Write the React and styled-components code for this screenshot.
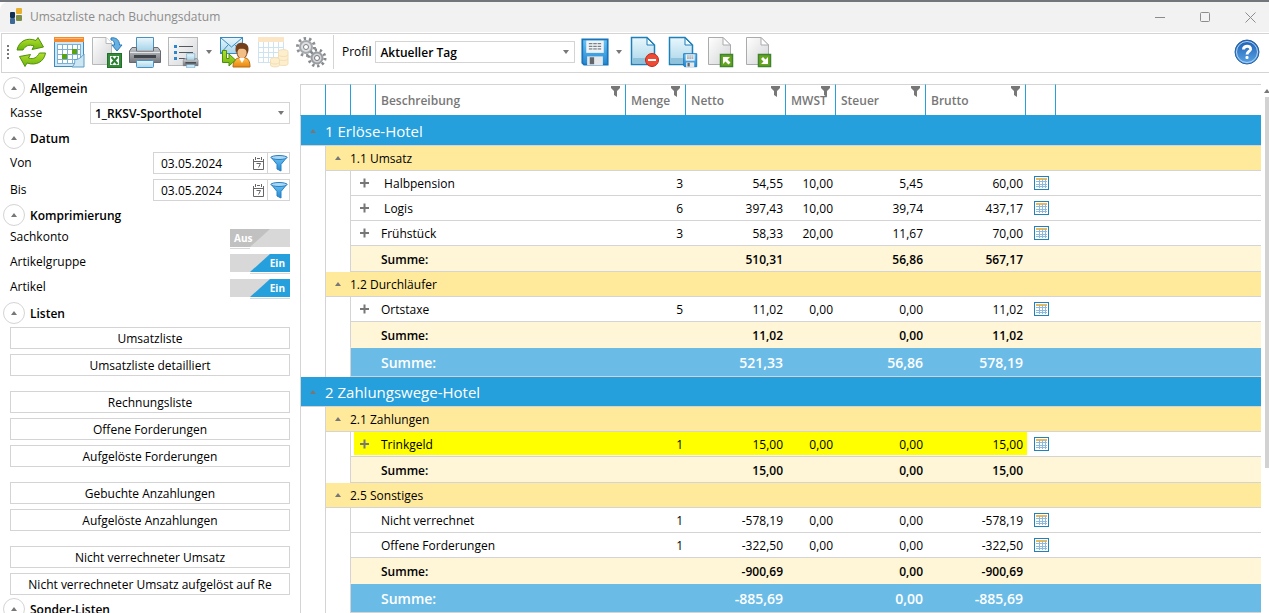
import React, { useState } from "react";
import styled, { createGlobalStyle } from "styled-components";

const sections = [
  {
    title: "1 Erlöse-Hotel",
    groups: [
      {
        title: "1.1 Umsatz",
        rows: [
          { name: "\u00a0Halbpension", values: ["3", "54,55", "10,00", "5,45", "60,00"], open: true },
          { name: "\u00a0Logis", values: ["6", "397,43", "10,00", "39,74", "437,17"], open: true },
          { name: "Frühstück", values: ["3", "58,33", "20,00", "11,67", "70,00"], open: true },
        ],
        sum: ["", "510,31", "", "56,86", "567,17"],
      },
      {
        title: "1.2 Durchläufer",
        rows: [
          { name: "Ortstaxe", values: ["5", "11,02", "0,00", "0,00", "11,02"], open: true },
        ],
        sum: ["", "11,02", "", "0,00", "11,02"],
      },
    ],
    total: ["", "521,33", "", "56,86", "578,19"],
  },
  {
    title: "2 Zahlungswege-Hotel",
    groups: [
      {
        title: "2.1 Zahlungen",
        rows: [
          { name: "Trinkgeld", values: ["1", "15,00", "0,00", "0,00", "15,00"], open: true, marked: true },
        ],
        sum: ["", "15,00", "", "0,00", "15,00"],
      },
      {
        title: "2.5 Sonstiges",
        rows: [
          { name: "Nicht verrechnet", values: ["1", "-578,19", "0,00", "0,00", "-578,19"] },
          { name: "Offene Forderungen", values: ["1", "-322,50", "0,00", "0,00", "-322,50"] },
        ],
        sum: ["", "-900,69", "", "0,00", "-900,69"],
      },
    ],
    total: ["", "-885,69", "", "0,00", "-885,69"],
  },
];

const columns = ["Beschreibung", "Menge", "Netto", "MWST", "Steuer", "Brutto"];
const columnWidths = [25, 25, 25, 250, 60, 100, 50, 90, 100, 30];

const lists = [
  ["Umsatzliste", "Umsatzliste detailliert"],
  ["Rechnungsliste", "Offene Forderungen", "Aufgelöste Forderungen"],
  ["Gebuchte Anzahlungen", "Aufgelöste Anzahlungen"],
  ["Nicht verrechneter Umsatz", "Nicht verrechneter Umsatz aufgelöst auf Re"],
];

/* ---------- icons ---------- */

const Svg = ({ size = 32, box = size, children }) => (
  <svg width={size} height={size} viewBox={`0 0 ${box} ${box}`} fill="none" aria-hidden="true">
    {children}
  </svg>
);

const Gradients = () => (
  <svg width="0" height="0" style={{ position: "absolute" }} aria-hidden="true">
    <defs>
      <linearGradient id="green" x1="0" y1="0" x2="0" y2="1">
        <stop offset="0" stopColor="#b4e02c" />
        <stop offset="1" stopColor="#6cb40e" />
      </linearGradient>
      <linearGradient id="sky" x1="0" y1="0" x2="0" y2="1">
        <stop offset="0" stopColor="#e9f7fc" />
        <stop offset="1" stopColor="#a9d5ea" />
      </linearGradient>
      <linearGradient id="blue" x1="0" y1="0" x2="0" y2="1">
        <stop offset="0" stopColor="#6cc4f5" />
        <stop offset="1" stopColor="#2287d2" />
      </linearGradient>
      <linearGradient id="grey" x1="0" y1="0" x2="1" y2="1">
        <stop offset="0" stopColor="#ffffff" />
        <stop offset="1" stopColor="#d3d4d6" />
      </linearGradient>
      <linearGradient id="steel" x1="0" y1="0" x2="0" y2="1">
        <stop offset="0" stopColor="#c4c7cb" />
        <stop offset="1" stopColor="#74787e" />
      </linearGradient>
      <linearGradient id="orange" x1="0" y1="0" x2="0" y2="1">
        <stop offset="0" stopColor="#ffc04d" />
        <stop offset="1" stopColor="#e8840f" />
      </linearGradient>
      <linearGradient id="help" x1="0" y1="0" x2="0" y2="1">
        <stop offset="0" stopColor="#1d5fb4" />
        <stop offset="1" stopColor="#5ba4e4" />
      </linearGradient>
    </defs>
  </svg>
);

const LogoIcon = () => (
  <svg width="14" height="18" viewBox="0 0 14 18" aria-hidden="true">
    <rect x="1" y="4" width="5" height="6" rx="1" fill="#12304f" />
    <rect x="7" y="0" width="6" height="6" rx="1" fill="#e7b02c" />
    <rect x="7" y="7" width="6" height="6" rx="1" fill="#7c8f45" />
    <rect x="1" y="10" width="5" height="6" rx="1" fill="#3c6a94" />
  </svg>
);

const RefreshIcon = () => (
  <Svg>
    <path d="M2 14C4 5 12 1 21 4.500L23 1.500 28.500 11 17 13.500 19 10C14 8 10 10 8 14Z" fill="url(#green)" stroke="#4f8f0e" />
    <path d="M30.500 17C29 26 21 30 12 27L10 30.500 4.500 20.500 15.500 18.500 13.500 22C19 24 22 21 24.500 17Z" fill="url(#green)" stroke="#4f8f0e" />
  </Svg>
);

const CalendarIcon = () => (
  <Svg>
    <rect x="1.500" y="1.500" width="29" height="29" fill="#cfe7f5" stroke="#3a8cc0" />
    <rect x="1" y="1" width="30" height="5" fill="#f58a2c" />
    <rect x="2" y="2" width="28" height="1" fill="#fbb777" />
    <rect x="4.500" y="8.500" width="23" height="19" fill="#fff" stroke="#7cb0d4" />
    <path d="M9.500 8v20M14.500 8v20M19.500 8v20M24.500 8v20M4 13.500h24M4 18.500h24M4 23.500h24" stroke="#7cb0d4" />
    <rect x="19" y="13" width="5" height="5" fill="#5aa30f" />
    <rect x="9" y="18" width="5" height="5" fill="#5aa30f" />
    <path d="M19 31C22 28 22 26 21.500 23.500 25 24 29 21 31 18V31Z" fill="#cde6f4" stroke="#5c9cc6" />
  </Svg>
);

const ExcelIcon = () => (
  <Svg>
    <path d="M1.500 1.500H15L20.500 7V28.500H1.500Z" fill="url(#grey)" stroke="#b6b8ba" />
    <path d="M15 1.500V7.500H21" fill="#fff" stroke="#b6b8ba" />
    <path d="M20 2C25 1 28.500 4 28.500 9H31L26 15 21 9H23.500C23.500 6 22.500 4 20 4Z" fill="#66b1e2" stroke="#2c7ab8" />
    <rect x="16.500" y="17.500" width="14" height="14" fill="#358a3c" stroke="#20702a" />
    <path d="M19 20h9v9h-9z" fill="#fff" />
    <path d="M20.500 21l6 7M26.500 21l-6 7" stroke="#2a7f33" strokeWidth="2" />
  </Svg>
);

const PrinterShape = () => (
  <>
    <path d="M7.500 14V1.500H24.500V14" fill="url(#sky)" stroke="#4a90c0" />
    <path d="M3 11.500H7.500V15H24.500V11.500H29L31.500 15V26.500H.500V15Z" fill="url(#steel)" stroke="#666a70" />
    <path d="M1 16.500H31" stroke="#e2e4e6" />
    <rect x="5" y="19" width="22" height="3" fill="#3f444b" />
    <rect x="7.500" y="24.500" width="17" height="7" rx="1" fill="url(#sky)" stroke="#4a90c0" />
  </>
);

const PrinterIcon = () => (
  <Svg>
    <PrinterShape />
  </Svg>
);

const PrintListIcon = () => (
  <Svg>
    <rect x="1.500" y="1.500" width="29" height="28" fill="url(#grey)" stroke="#b6b8ba" />
    <path d="M7 9h3v3h-3zM7 15h3v3h-3zM7 21h3v3h-3z" fill="#2f86c8" />
    <path d="M12 10.500H26M12 16.500H26M12 22.500H18" stroke="#55595e" />
    <g transform="translate(16 17) scale(.48)">
      <PrinterShape />
    </g>
  </Svg>
);

const MailUserIcon = () => (
  <Svg>
    <rect x="1.500" y="1.500" width="22" height="16" fill="url(#sky)" stroke="#3a8cc0" />
    <path d="M2 2L12.500 11 23 2M2 17L9 9M23 17L16 9" stroke="#3a8cc0" />
    <path d="M14 31C14 25 17 22 20 22H26C29 22 31 25 31 31Z" fill="url(#orange)" stroke="#b9690d" />
    <ellipse cx="23" cy="16" rx="5" ry="7" fill="#f3bd86" stroke="#8c4d1b" />
    <path d="M17 17C15 8 20 6 24 7 29 7 31 12 28.500 18 28 14 26 12 20 13Z" fill="#74401b" />
    <path d="M20 22l3 5 3-5z" fill="#fff" />
    <path d="M3.500 14.500H7.500V22.500H10V18L16.500 24 10 30V26.500H3.500Z" fill="url(#green)" stroke="#4f8f0e" />
  </Svg>
);

const FadedTableIcon = () => (
  <Svg>
    <g opacity=".32">
      <rect x="1.500" y="2.500" width="25" height="24" fill="#fff" stroke="#6aa9d3" />
      <rect x="1" y="1" width="26" height="5" fill="#f6b04f" />
      <path d="M6.500 6v20M11.500 6v20M16.500 6v20M21.500 6v20M2 11.500h24M2 16.500h24M2 21.500h24" stroke="#6aa9d3" />
      <path d="M21.500 15.500C21.500 13 31 13 31 15.500V28C31 30 21.500 30 21.500 28Z" fill="#fbcb62" stroke="#d99b24" />
      <path d="M13.500 23.500C13.500 21 22.500 21 22.500 23.500V29C22.500 31.500 13.500 31.500 13.500 29Z" fill="#fbcb62" stroke="#d99b24" />
      <path d="M21.500 19c2 2 8 2 9.500 0M21.500 23c2 2 8 2 9.500 0M13.500 26.500c2 2 7 2 9 0" stroke="#d99b24" />
    </g>
  </Svg>
);

const GearIcon = () => (
  <Svg>
    <circle cx="11" cy="11" r="8.500" stroke="#8b8e92" strokeWidth="3" strokeDasharray="2.450 2.900" />
    <circle cx="11" cy="11" r="6" fill="#dcdee0" stroke="#a5a8ac" strokeWidth="2" />
    <circle cx="11" cy="11" r="2.500" fill="#fff" stroke="#7c7f83" />
    <circle cx="22" cy="22" r="8" stroke="#85888c" strokeWidth="3" strokeDasharray="2.300 2.730" />
    <circle cx="22" cy="22" r="5.500" fill="#d3d5d7" stroke="#999ca0" strokeWidth="2" />
    <circle cx="22" cy="22" r="2.500" fill="#fff" stroke="#75787c" />
  </Svg>
);

const DiskShape = () => (
  <>
    <path d="M1.500 1.500H30.500V30.500H3.500L1.500 28.500Z" fill="url(#blue)" stroke="#1a74b8" strokeWidth="2" />
    <rect x="6" y="3" width="20" height="14" fill="#eef3f6" />
    <path d="M9 6.500h14M9 9.500h14M9 12.500h14" stroke="#4b5258" strokeDasharray="4 1" />
    <rect x="7" y="21" width="18" height="10" fill="#e4e8eb" />
    <rect x="10" y="22" width="5" height="8" fill="#62676d" />
  </>
);

const DiskIcon = () => (
  <Svg size={28} box={32}>
    <DiskShape />
  </Svg>
);

const PageShape = () => (
  <>
    <path d="M2.500 1.500H18L25.500 9V28.500H2.500Z" fill="url(#sky)" stroke="#1f7fb8" strokeWidth="1.500" />
    <path d="M18 2V9H25Z" fill="#f3fbfe" stroke="#1f7fb8" />
    <path d="M4 22H24V27H4Z" fill="#8fc3dc" />
  </>
);

const PageRemoveIcon = () => (
  <Svg>
    <PageShape />
    <circle cx="23" cy="24" r="6.500" fill="#ee4a34" stroke="#bb2a1b" />
    <rect x="19" y="23" width="8" height="2" fill="#fff" />
  </Svg>
);

const PageSaveIcon = () => (
  <Svg>
    <PageShape />
    <g transform="translate(16 17) scale(.45)">
      <DiskShape />
    </g>
  </Svg>
);

const PageArrowIcon = ({ down }) => (
  <Svg>
    <path d="M3.500 1.500H18L25.500 9V28.500H3.500Z" fill="url(#grey)" stroke="#a9abad" />
    <path d="M18 1.500V9H25.500Z" fill="#fff" stroke="#a9abad" />
    <rect x="15.500" y="18.500" width="12" height="12" fill="#67a51f" stroke="#3f8230" strokeWidth="1.500" />
    <path
      d={down ? "M25 21V28H18L20.500 25.500 18 23 20 21 22.500 23.500Z" : "M18 28V21H25L22.500 23.500 25.500 26.500 23.500 28.500 20.500 25.500Z"}
      fill="#fff"
    />
  </Svg>
);

const HelpIcon = () => (
  <Svg size={26}>
    <circle cx="13" cy="13" r="12" fill="url(#help)" stroke="#2460a8" />
    <circle cx="13" cy="13" r="10.500" stroke="#b4d4f2" />
    <path d="M9.500 10.500C9.500 6 17 6 16.500 10.500 16 12.500 13 12.500 13 15.500" stroke="#fff" strokeWidth="3" />
    <rect x="11.500" y="17" width="3" height="3" rx="1" fill="#fff" />
  </Svg>
);

const UpArrow = () => (
  <svg width="6" height="4" viewBox="0 0 6 4" aria-hidden="true">
    <path d="M3 0L6 4H0Z" fill="#777" />
  </svg>
);

const DownArrow = () => (
  <svg width="6" height="4" viewBox="0 0 6 4" aria-hidden="true">
    <path d="M0 0H6L3 4Z" fill="#777" />
  </svg>
);

const HeadFilter = () => (
  <svg width="9" height="11" viewBox="0 0 9 11" aria-hidden="true">
    <path d="M0 0H9V2L6 5V11L3 9V5L0 2Z" fill="#777" />
  </svg>
);

const FunnelIcon = () => (
  <svg width="18" height="17" viewBox="0 0 18 17" aria-hidden="true">
    <path d="M1 2L7 9.500V14L11 16V9.500L17 2Z" fill="url(#blue)" stroke="#2a7fc0" />
    <ellipse cx="9" cy="2.500" rx="8" ry="2" fill="#a9d8f5" stroke="#2a7fc0" />
  </svg>
);

const DayIcon = () => (
  <svg width="11" height="13" viewBox="0 0 11 13" fill="none" stroke="#666" aria-hidden="true">
    <path d="M2.500 0v3M8.500 0v3M.500 2v10.500h10V2M1 4.500h9M4 1.500h3M3.500 6.500h4l-2 4" />
  </svg>
);

const GridIcon = () => (
  <svg width="16" height="15" viewBox="0 0 16 15" aria-hidden="true">
    <rect x="1.500" y=".500" width="14" height="13" fill="#fff" stroke="#1f82ba" />
    <rect x="3" y="2" width="11" height="2" fill="#f2b84b" />
    <path d="M6.500 3v9M9.500 3v9M12.500 3v9M3 5.500h11M3 8.500h11M3 10.500h11" stroke="#8db9dc" />
  </svg>
);

/* ---------- shell ---------- */

const GlobalStyle = createGlobalStyle`
  * { box-sizing: border-box; }
  body {
    margin: 0;
    overflow: hidden;
    background: #fff;
    color: #000;
    font: 12px/16px "Open Sans", "Noto Sans", sans-serif;
  }
  button, input, select {
    margin: 0;
    padding: 0;
    border: 0;
    border-radius: 0;
    background: none;
    color: inherit;
    font: inherit;
  }
  svg { display: block; flex: none; }
`;

const Window = styled.div`
  display: flex;
  flex-direction: column;
  height: 100vh;
  border-top: 2px solid #73777b;
`;

const TitleBar = styled.header`
  display: flex;
  flex: none;
  align-items: center;
  height: 31px;
  padding-left: 9px;
  gap: 7px;
  background: #f2f2f2;
  border-bottom: 1px solid #fff;
  border-top-left-radius: 8px;
  color: #8c8c8c;

  h1 {
    flex: 1;
    margin: 0;
    font-size: 12px;
    font-weight: 400;
  }
`;

const WindowButton = styled.button`
  display: flex;
  align-items: center;
  justify-content: center;
  width: 38px;
  height: 28px;
  color: #8c8c8c;
`;

const Toolbar = styled.div`
  display: flex;
  flex: none;
  align-items: center;
  height: 40px;
  margin-left: 1px;
  padding: 0 9px 2px 5px;
  gap: 6px;
  border: 1px solid #d4d4d4;
  border-right: 0;
`;

const Grip = styled.span`
  width: 2px;
  height: 15px;
  background: repeating-linear-gradient(#777 0 2px, transparent 2px 4px);
`;

const ToolButton = styled.button`
  display: flex;
  align-items: center;
  justify-content: center;
  height: 32px;
`;

const MenuButton = styled(ToolButton)`
  width: 8px;
`;

const ProfileField = styled.label`
  display: flex;
  align-items: center;
  height: 34px;
  padding-left: 8px;
  gap: 4px;
  border-left: 1px solid #d4d4d4;
`;

const SelectBox = styled.span`
  display: flex;
  align-items: center;
  width: 200px;
  height: 22px;
  padding-right: 5px;
  border: 1px solid #d4d4d4;

  select {
    flex: 1;
    height: 20px;
    padding: 2px 0 0 4px;
    appearance: none;
    outline: 0;
    font-weight: 600;
  }
`;

const Push = styled.span`
  flex: 1;
`;

const Body = styled.div`
  display: flex;
  flex: 1;
  min-height: 0;
`;

/* ---------- sidebar ---------- */

const Sidebar = styled.aside`
  display: flex;
  flex: none;
  flex-direction: column;
  width: 300px;
  padding: 4px 10px 0 3px;
  gap: 3px;
  overflow: hidden;
`;

const PanelHead = styled.h2`
  display: flex;
  flex: none;
  align-items: center;
  height: 22px;
  margin: 0;
  gap: 5px;
  font-size: 12px;
  font-weight: 600;

  span {
    padding-top: 2px;
  }
`;

const RoundButton = styled.button`
  display: flex;
  align-items: center;
  justify-content: center;
  width: 22px;
  height: 22px;
  border: 1px solid #d4d4d4;
  border-radius: 50%;
`;

const Fields = styled.div`
  display: flex;
  flex: none;
  flex-direction: column;
  padding-left: 7px;
  gap: 5px;
`;

const Field = styled.div`
  display: flex;
  align-items: center;
  justify-content: space-between;
  height: 22px;
`;

const SwitchRow = styled(Field)`
  align-items: flex-start;
  height: 20px;
`;

const DateBox = styled.span`
  display: flex;
  width: 137px;
  height: 22px;
  border: 1px solid #d4d4d4;

  input {
    flex: 1;
    min-width: 0;
    padding: 2px 0 0 7px;
    outline: 0;
  }

  button {
    display: flex;
    align-items: center;
    justify-content: center;
    width: 18px;
  }

  button:last-child {
    width: 22px;
    border-left: 1px solid #d4d4d4;
  }
`;

const Switch = styled.span`
  display: grid;
  width: 60px;
  height: 20px;
  padding-bottom: 1px;
  background:
    linear-gradient(#d8d8d8, #d8d8d8) 0 0 / 60px 18px no-repeat,
    linear-gradient(#d8d8d8, #d8d8d8) ${(p) => (p.$on ? "20px 19px / 40px" : "0 19px / 20px")} 1px no-repeat;
  color: #fff;
  font-size: 10px;
  font-weight: 700;
  line-height: 18px;

  input,
  span {
    grid-area: 1 / 1;
    height: 18px;
  }

  input {
    opacity: 0;
  }

  span {
    padding: 0 5px 0 4px;
    pointer-events: none;
    text-align: ${(p) => (p.$on ? "right" : "left")};
    background: ${(p) => (p.$on ? "#26a0dc" : "#c1c1c1")};
    clip-path: ${(p) =>
      p.$on
        ? "polygon(40px 0, 100% 0, 100% 100%, 20px 100%)"
        : "polygon(0 0, 40px 0, 20px 100%, 0 100%)"};
  }
`;

const ListGroups = styled.div`
  display: flex;
  flex: none;
  flex-direction: column;
  padding-left: 7px;
  gap: 15px;
`;

const ListGroup = styled.div`
  display: flex;
  flex-direction: column;
  gap: 5px;
`;

const ListButton = styled.button`
  height: 22px;
  padding-top: 2px;
  border: 1px solid #d4d4d4;
  white-space: nowrap;
`;

/* ---------- report table ---------- */

const Report = styled.main`
  flex: 1;
  min-width: 0;
  padding-top: 11px;
`;

const Table = styled.table`
  width: 100%;
  table-layout: fixed;
  border-collapse: separate;
  border-spacing: 0;

  th,
  td {
    padding: 0;
    white-space: nowrap;
  }
`;

const HeadCell = styled.th`
  position: relative;
  height: 32px;
  border-top: 1px solid #d4d4d4;
  border-bottom: 1px solid #26a0dc;
  border-left: 1px solid #26a0dc;
  color: #777;
  font-weight: 600;
  text-align: left;

  &:first-child {
    border-left-color: #d4d4d4;
  }

  span {
    display: block;
    padding: 2px 0 0 5px;
  }

  svg {
    position: absolute;
    top: 1px;
    right: 5px;
  }
`;

const Indent = styled.td`
  border-left: 1px solid #d4d4d4;
`;

const SectionCell = styled.td`
  height: 30px;
  background: #26a0dc;
  border-left: 1px solid #d4d4d4;
  border-bottom: 1px solid #d4d4d4;
  color: #fff;
  font-size: 15px;
`;

const GroupCell = styled.td`
  height: 25px;
  background: #ffe99b;
  border-left: 1px solid #d4d4d4;
  border-bottom: 1px solid #d4d4d4;

  span {
    padding-top: 2px;
  }
`;

const Caption = styled.div`
  display: flex;
  align-items: center;

  button {
    display: flex;
    justify-content: center;
    width: 24px;
    padding: 6px 0;
  }
`;

const Row = styled.tr`
  height: 25px;

  td:not(${Indent}) {
    padding: 2px 2px 0 0;
    border-bottom: 1px solid #d4d4d4;
    text-align: right;
  }

  td.edge:not(${Indent}) {
    padding: 0;
    border-left: 1px solid #d4d4d4;
  }

  td.name:not(${Indent}) {
    padding-left: 6px;
    text-align: left;
  }

  td.tool:not(${Indent}) {
    padding: 0;
  }

  td.mark {
    background: linear-gradient(#ff0, #ff0) 0 0 / 100% 23px no-repeat;
  }

  td.edge.mark {
    background-position: 3px 0;
  }

  td.after {
    background: linear-gradient(#ff0, #ff0) 0 0 / 2px 23px no-repeat;
  }
`;

const SumRow = styled(Row)`
  height: 26px;
  font-weight: 600;

  td:not(${Indent}) {
    background: #fff5d7;
    border-bottom-color: ${(p) => (p.$last ? "#fff5d7" : "#d4d4d4")};
  }
`;

const TotalRow = styled(Row)`
  height: 29px;
  color: #fff;
  font-size: 14px;
  font-weight: 600;

  td:not(${Indent}) {
    background: #6abce7;
  }
`;

const IconButton = styled.button`
  display: flex;
  margin-left: 8px;
`;

const ScrollBar = styled.div`
  display: flex;
  flex: none;
  flex-direction: column;
  align-items: center;
  width: 8px;
  padding: 16px 0 145px 4px;
  gap: 4px;

  div {
    flex: 1;
    width: 4px;
    background: #d2d2d2;
  }
`;

const Toggle = ({ label }) => (
  <button type="button" aria-label={label}>
    <UpArrow />
  </button>
);

const Panel = ({ title }) => (
  <PanelHead>
    <RoundButton type="button" aria-label={title + " einklappen"}>
      <UpArrow />
    </RoundButton>
    <span>{title}</span>
  </PanelHead>
);

const DateField = ({ id, label }) => (
  <Field>
    <label htmlFor={id}>{label}</label>
    <DateBox>
      <input id={id} type="text" defaultValue="03.05.2024" />
      <button type="button" aria-label="Kalender öffnen">
        <DayIcon />
      </button>
      <button type="button" aria-label="Filtern">
        <FunnelIcon />
      </button>
    </DateBox>
  </Field>
);

const SwitchField = ({ id, label, initial }) => {
  const [on, setOn] = useState(initial);
  return (
    <SwitchRow>
      <label htmlFor={id}>{label}</label>
      <Switch $on={on}>
        <input id={id} type="checkbox" checked={on} onChange={() => setOn(!on)} />
        <span>{on ? "Ein" : "Aus"}</span>
      </Switch>
    </SwitchRow>
  );
};

const DataRow = ({ row }) => {
  const mark = row.marked ? "mark" : "";
  return (
    <Row>
      <Indent />
      <Indent />
      <td className={"edge " + mark}>
        {row.open && (
          <IconButton type="button" aria-label="Details anzeigen">
            <svg width="11" height="11" viewBox="0 0 11 11" aria-hidden="true">
              <path d="M1 5h9M5.500 .500v9" stroke="#777" strokeWidth="2" />
            </svg>
          </IconButton>
        )}
      </td>
      <td className={"name " + mark}>{row.name}</td>
      {row.values.map((value, i) => (
        <td key={i} className={mark}>
          {value}
        </td>
      ))}
      <td className={row.marked ? "tool after" : "tool"}>
        <IconButton type="button" aria-label="Buchungen anzeigen">
          <GridIcon />
        </IconButton>
      </td>
      <td />
    </Row>
  );
};

const SumCells = ({ values }) => (
  <>
    <Indent />
    <Indent />
    <td className="edge" />
    <td className="name">Summe:</td>
    {values.map((value, i) => (
      <td key={i}>{value}</td>
    ))}
    <td />
    <td />
  </>
);

const ReportTable = () => (
  <Table>
    <colgroup>
      {columnWidths.map((width, i) => (
        <col key={i} style={{ width }} />
      ))}
      <col />
    </colgroup>
    <thead>
      <tr>
        <HeadCell />
        <HeadCell />
        <HeadCell />
        {columns.map((name) => (
          <HeadCell key={name}>
            <span>{name}</span>
            <HeadFilter />
          </HeadCell>
        ))}
        <HeadCell />
        <HeadCell />
      </tr>
    </thead>
    <tbody>
      {sections.map((section) => (
        <React.Fragment key={section.title}>
          <tr>
            <SectionCell colSpan={11}>
              <Caption>
                <Toggle label="Bereich einklappen" />
                <span>{section.title}</span>
              </Caption>
            </SectionCell>
          </tr>
          {section.groups.map((group, i) => (
            <React.Fragment key={group.title}>
              <tr>
                <Indent />
                <GroupCell colSpan={10}>
                  <Caption>
                    <Toggle label="Gruppe einklappen" />
                    <span>{group.title}</span>
                  </Caption>
                </GroupCell>
              </tr>
              {group.rows.map((row) => (
                <DataRow key={row.name} row={row} />
              ))}
              <SumRow $last={i === section.groups.length - 1}>
                <SumCells values={group.sum} />
              </SumRow>
            </React.Fragment>
          ))}
          <TotalRow>
            <SumCells values={section.total} />
          </TotalRow>
        </React.Fragment>
      ))}
    </tbody>
  </Table>
);

export default function App() {
  return (
    <Window>
      <GlobalStyle />
      <Gradients />
      <TitleBar>
        <LogoIcon />
        <h1>Umsatzliste nach Buchungsdatum</h1>
        <WindowButton type="button" aria-label="Minimieren">
          <svg width="11" height="11" viewBox="0 0 11 11" stroke="currentColor">
            <path d="M0 5.500h10" />
          </svg>
        </WindowButton>
        <WindowButton type="button" aria-label="Maximieren">
          <svg width="11" height="11" viewBox="0 0 11 11" fill="none" stroke="currentColor">
            <rect x=".500" y=".500" width="9" height="9" rx="1" />
          </svg>
        </WindowButton>
        <WindowButton type="button" aria-label="Schließen">
          <svg width="11" height="11" viewBox="0 0 11 11" stroke="currentColor">
            <path d="M.500 .500l10 10M10.500 .500l-10 10" />
          </svg>
        </WindowButton>
      </TitleBar>

      <Toolbar>
        <Grip />
        <ToolButton type="button" aria-label="Aktualisieren"><RefreshIcon /></ToolButton>
        <ToolButton type="button" aria-label="Kalender"><CalendarIcon /></ToolButton>
        <ToolButton type="button" aria-label="Excel-Export"><ExcelIcon /></ToolButton>
        <ToolButton type="button" aria-label="Drucken"><PrinterIcon /></ToolButton>
        <ToolButton type="button" aria-label="Liste drucken"><PrintListIcon /></ToolButton>
        <MenuButton type="button" aria-label="Druckoptionen"><DownArrow /></MenuButton>
        <ToolButton type="button" aria-label="Per E-Mail senden"><MailUserIcon /></ToolButton>
        <ToolButton type="button" aria-label="Buchungen" disabled><FadedTableIcon /></ToolButton>
        <ToolButton type="button" aria-label="Einstellungen"><GearIcon /></ToolButton>
        <ProfileField>
          Profil
          <SelectBox>
            <select defaultValue="Aktueller Tag">
              <option>Aktueller Tag</option>
            </select>
            <DownArrow />
          </SelectBox>
        </ProfileField>
        <ToolButton type="button" aria-label="Speichern"><DiskIcon /></ToolButton>
        <MenuButton type="button" aria-label="Speicheroptionen"><DownArrow /></MenuButton>
        <ToolButton type="button" aria-label="Profil löschen"><PageRemoveIcon /></ToolButton>
        <ToolButton type="button" aria-label="Profil speichern"><PageSaveIcon /></ToolButton>
        <ToolButton type="button" aria-label="Profil importieren"><PageArrowIcon /></ToolButton>
        <ToolButton type="button" aria-label="Profil exportieren"><PageArrowIcon down /></ToolButton>
        <Push />
        <ToolButton type="button" aria-label="Hilfe"><HelpIcon /></ToolButton>
      </Toolbar>

      <Body>
        <Sidebar>
          <Panel title="Allgemein" />
          <Fields>
            <Field>
              <label htmlFor="kasse">Kasse</label>
              <SelectBox>
                <select id="kasse" defaultValue="1_RKSV-Sporthotel">
                  <option>1_RKSV-Sporthotel</option>
                </select>
                <DownArrow />
              </SelectBox>
            </Field>
          </Fields>
          <Panel title="Datum" />
          <Fields>
            <DateField id="von" label="Von" />
            <DateField id="bis" label="Bis" />
          </Fields>
          <Panel title="Komprimierung" />
          <Fields>
            <SwitchField id="sachkonto" label="Sachkonto" initial={false} />
            <SwitchField id="artikelgruppe" label="Artikelgruppe" initial={true} />
            <SwitchField id="artikel" label="Artikel" initial={true} />
          </Fields>
          <Panel title="Listen" />
          <ListGroups>
            {lists.map((group) => (
              <ListGroup key={group[0]}>
                {group.map((name) => (
                  <ListButton key={name} type="button">
                    {name}
                  </ListButton>
                ))}
              </ListGroup>
            ))}
          </ListGroups>
          <Panel title="Sonder-Listen" />
        </Sidebar>
        <Report>
          <ReportTable />
        </Report>
        <ScrollBar>
          <UpArrow />
          <div />
        </ScrollBar>
      </Body>
    </Window>
  );
}
